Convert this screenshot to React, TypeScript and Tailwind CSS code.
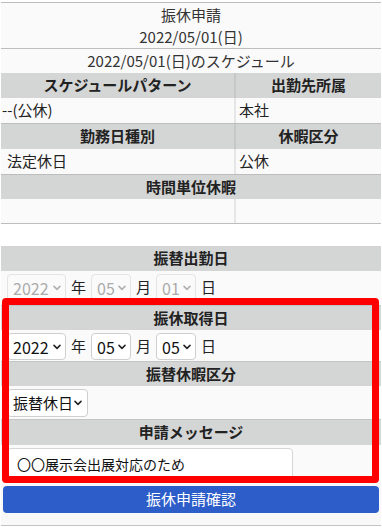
import React from "react";

const Chevron = ({ disabled }: { disabled?: boolean }) => (
  <svg width="8" height="6" viewBox="0 0 8 6" className="shrink-0">
    <path
      d="M1 1.4 L4 4.4 L7 1.4"
      fill="none"
      stroke={disabled ? "#b0b0b0" : "#222"}
      strokeWidth="1.5"
      strokeLinecap="round"
      strokeLinejoin="round"
    />
  </svg>
);

const Sel = ({
  value,
  w,
  disabled,
}: {
  value: string;
  w: string;
  disabled?: boolean;
}) => (
  <div
    className={`${w} flex items-center justify-between h-[27px] rounded-[4px] border pl-[5px] pr-[4px] text-[16px] leading-none ${
      disabled
        ? "border-[#e4e4e4] text-[#ababab] bg-[#fafafa]"
        : "border-[#cfcfcf] text-[#111] bg-white"
    }`}
  >
    <span>{value}</span>
    <Chevron disabled={disabled} />
  </div>
);

const Lbl = ({ t }: { t: string }) => (
  <span className="w-[17px] h-[27px] flex items-center justify-center text-[15px] text-[#222]">{t}</span>
);

const DateRow = ({ d, disabled, h }: { d: string; disabled?: boolean; h: string }) => (
  <div className={`flex items-start gap-[4px] pl-[6px] pt-[3px] ${h} bg-[#fafafa] border-b border-[#c4c4c4]`}>
    <Sel value="2022" w="w-[59px]" disabled={disabled} />
    <Lbl t="年" />
    <Sel value="05" w="w-[40px]" disabled={disabled} />
    <Lbl t="月" />
    <Sel value={d} w="w-[40px]" disabled={disabled} />
    <Lbl t="日" />
  </div>
);

const Head = ({ t, h }: { t: string; h: string }) => (
  <div className={`${h} flex items-center justify-center bg-[#d4d5d5] font-bold text-[15px] text-[#222]`}>
    {t}
  </div>
);

const HeadPair = ({ a, b }: { a: string; b: string }) => (
  <div className="flex h-[25px] bg-[#d4d5d5] font-bold text-[15px] text-[#222]">
    <div className="w-[233px] flex items-center justify-center">{a}</div>
    <div className="w-[2px] bg-[#c6c7c7]" />
    <div className="flex-1 flex items-center justify-center">{b}</div>
  </div>
);

const DataPair = ({ a, b, apad }: { a: string; b: string; apad: string }) => (
  <div className="flex h-[26px] bg-[#fafafa] text-[15px] text-[#222] border-b border-[#bdbdbd]">
    <div className={`w-[233px] flex items-center ${apad}`}>{a}</div>
    <div className="w-[2px] bg-[#e6e6e6]" />
    <div className="flex-1 flex items-center pl-[3px]">{b}</div>
  </div>
);

export default function App() {
  return (
    <div className="relative w-[382px] h-[527px] overflow-hidden bg-white font-['Noto_Sans_CJK_JP','Noto_Sans',sans-serif] text-[#222]">
      <div className="px-[1px] pt-[2px]">
        {/* schedule table */}
        <div className="border-t border-[#bdbdbd]">
          <div className="h-[46px] flex flex-col items-center justify-center bg-[#fafafa] text-[15px] leading-[22px] text-[#333] border-b border-[#bdbdbd]">
            <div>振休申請</div>
            <div>2022/05/01(日)</div>
          </div>
          <div className="h-[24px] flex items-center justify-center bg-[#fafafa] text-[15px] text-[#333]">
            2022/05/01(日)のスケジュール
          </div>
          <HeadPair a="スケジュールパターン" b="出勤先所属" />
          <DataPair a="--(公休)" b="本社" apad="pl-[1px]" />
          <HeadPair a="勤務日種別" b="休暇区分" />
          <DataPair a="法定休日" b="公休" apad="pl-[6px]" />
          <Head t="時間単位休暇" h="h-[24px]" />
          <div className="flex h-[25px] bg-[#fafafa] border-b border-[#bdbdbd]">
            <div className="w-[233px]" />
            <div className="w-[2px] bg-[#e6e6e6]" />
            <div className="flex-1" />
          </div>
        </div>

        {/* form table */}
        <div className="mt-[22px]">
          <Head t="振替出勤日" h="h-[25px]" />
          <DateRow d="01" disabled h="h-[35px]" />
          <Head t="振休取得日" h="h-[24px]" />
          <DateRow d="05" h="h-[32px]" />
          <Head t="振替休暇区分" h="h-[24px]" />
          <div className="flex items-start pl-[6px] pt-[3px] h-[34px] bg-[#fafafa] border-b border-[#c4c4c4]">
            <div className="w-[81px] flex items-center justify-between h-[28px] rounded-[4px] border border-[#cfcfcf] bg-white pl-[5px] pr-[5px] text-[15px] text-[#111]">
              <span>振替休日</span>
              <Chevron />
            </div>
          </div>
          <Head t="申請メッセージ" h="h-[25px]" />
          <div className="h-[38px] pl-[6px] pt-[3px] bg-[#fafafa]">
            <div className="w-[286px] h-[32px] flex items-center rounded-[4px] border border-[#d6d6d6] bg-white pl-[9px] text-[14px] text-[#111]">
              〇〇展示会出展対応のため
            </div>
          </div>
          <div className="bg-[#f8f8f8] px-[2px] pt-[3px] border-b border-[#c4c4c4] h-[43px]">
            <div className="h-[27px] rounded-[4px] bg-[#2c5dc9] flex items-center justify-center text-white text-[15px]">
              振休申請確認
            </div>
          </div>
        </div>
      </div>

      {/* red annotation frame */}
      <div className="absolute left-[2px] top-[298px] w-[377px] h-[185px] border-[7px] border-[#ff0000] rounded-[4px] pointer-events-none" />
    </div>
  );
}
